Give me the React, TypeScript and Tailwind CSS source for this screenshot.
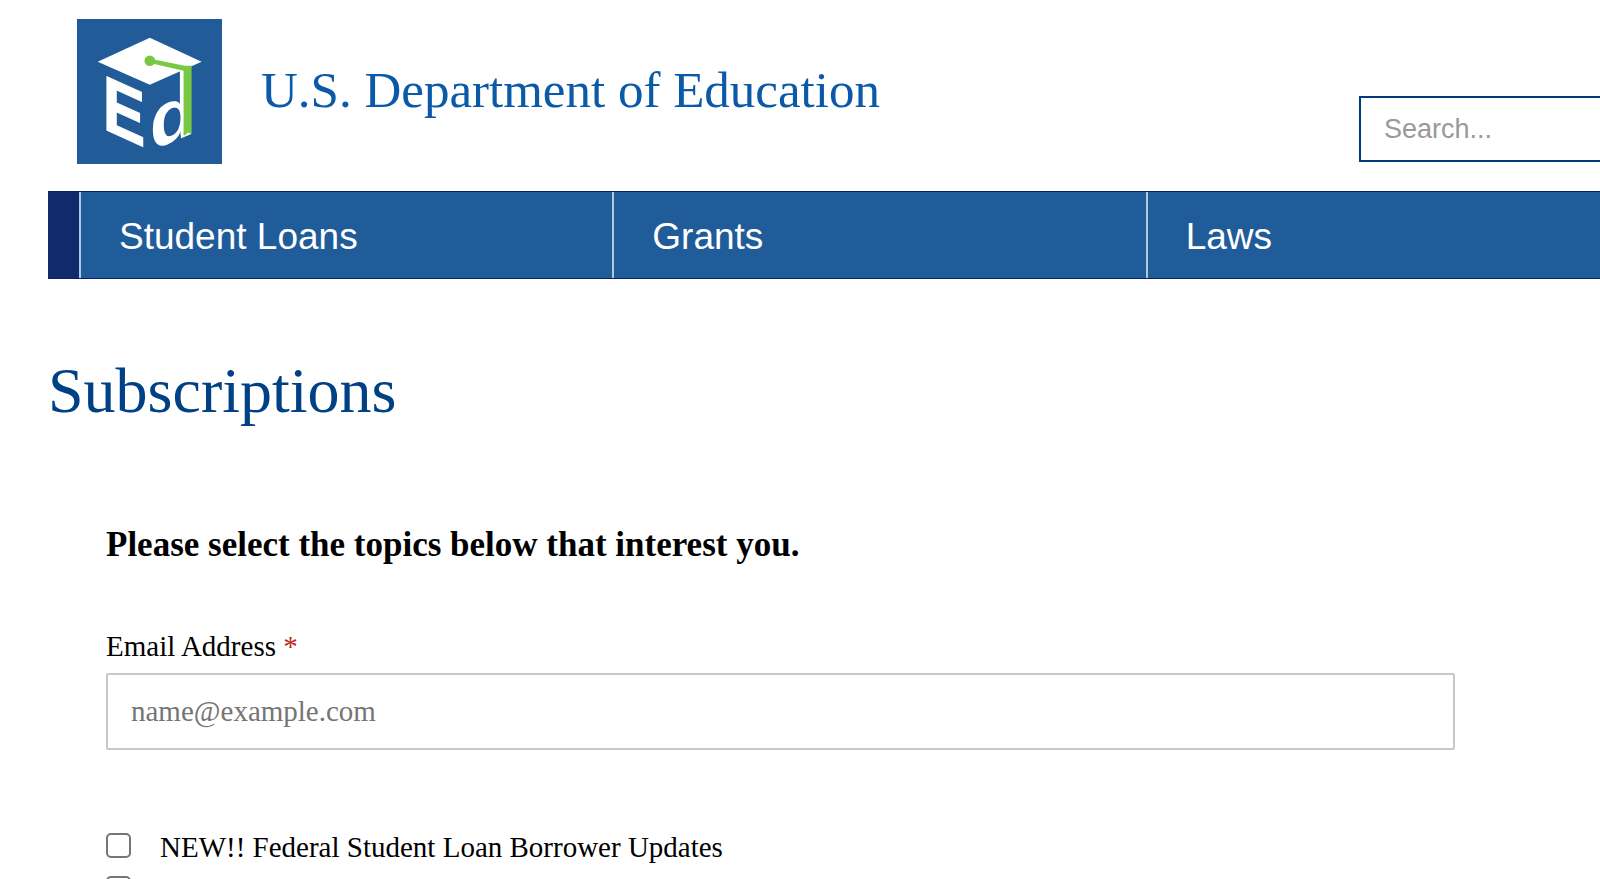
function Logo() {
  return (
    <svg viewBox="22 21 434 434" className="h-[145px] w-[145px] shrink-0" aria-hidden="true">
      <rect x="22" y="21" width="434" height="434" fill="#215c98" />
      <path d="M84 149 L240 77 L395 149 L240 218 Z" fill="#fff" />
      <g fill="#fff" fontFamily="Liberation Sans" fontWeight="700" fontSize="232">
        <text transform="matrix(0.82 0.37 0 1 99 348)" stroke="#fff" strokeWidth="4">E</text>
        <text transform="matrix(0.98 -0.4 0 0.98 240 416)">d</text>
      </g>
      <rect x="330" y="165" width="14" height="120" fill="#fff" />
      <circle cx="240" cy="146" r="16" fill="#78c843" />
      <path d="M240 140 L345 161 H365 V362 L359 364 L353 361 L347 368 L341 370 V176 L240 153 Z" fill="#78c843" />
    </svg>
  );
}

const navItems = ["Student Loans", "Grants", "Laws"];

export default function App() {
  return (
    <div className="h-screen overflow-hidden bg-white font-['Liberation_Serif',serif] text-black">
      <header>
        <div className="flex h-[191px] items-start justify-between pl-[77px] pt-[19px]">
          <a href="#home" className="flex items-center gap-[39px]">
            <Logo />
            <span className="whitespace-nowrap pb-1 text-[51px] leading-[60px] text-[#0b5aa8]">
              U.S. Department of Education
            </span>
          </a>
          <input
            type="search"
            aria-label="Search"
            placeholder="Search..."
            className="mt-[77px] h-[66px] w-[241px] shrink-0 border-2 border-r-0 border-[#003a80] pl-[23px] font-['Liberation_Sans',sans-serif] text-[27px] outline-none placeholder:text-[#999999]"
          />
        </div>
        <nav className="ml-12 flex h-[88px] border-y border-[#0b1f66] bg-[#205c99] font-['Liberation_Sans',sans-serif]">
          <div className="w-[31px] shrink-0 bg-[#112a6c]" />
          {navItems.map((item) => (
            <a
              key={item}
              href={"#" + item.toLowerCase().replace(" ", "-")}
              className="flex w-[calc(100vw/3)] shrink-0 items-center border-l-2 border-[#b4c6dc] pl-[38px] pt-1 text-[37px] text-white"
            >
              {item}
            </a>
          ))}
        </nav>
      </header>
      <main className="pl-12">
        <h1 className="pt-[76px] text-[64px] leading-[72px] text-[#004085]">Subscriptions</h1>
        <form className="ml-[58px] mr-[145px] mt-[97px]">
          <h2 className="text-[35px] font-bold leading-[42px]">
            Please select the topics below that interest you.
          </h2>
          <label htmlFor="email" className="mt-[63px] block text-[29px] leading-[34px]">
            Email Address <span className="text-[#c0271b]">*</span>
          </label>
          <input
            id="email"
            type="email"
            placeholder="name@example.com"
            className="mt-[10px] block h-[77px] w-full rounded-xs border-2 border-[#c8c8c8] px-[23px] text-[29px] outline-none placeholder:text-[#757575]"
          />
          <ul className="mt-[76px] text-[29px] leading-[43px]">
            <li className="flex h-[43px] items-start gap-[29px]">
              <input
                id="borrower-updates"
                type="checkbox"
                className="mt-[7px] h-[25px] w-[25px] shrink-0 appearance-none rounded-[5px] border-2 border-[#767676] bg-white checked:bg-[#205c99]"
              />
              <label htmlFor="borrower-updates">NEW!! Federal Student Loan Borrower Updates</label>
            </li>
            <li className="flex h-[43px] items-start">
              <input
                type="checkbox"
                aria-label="Topic"
                className="mt-[7px] h-[25px] w-[25px] shrink-0 appearance-none rounded-[5px] border-2 border-[#767676] bg-white checked:bg-[#205c99]"
              />
            </li>
          </ul>
        </form>
      </main>
    </div>
  );
}
